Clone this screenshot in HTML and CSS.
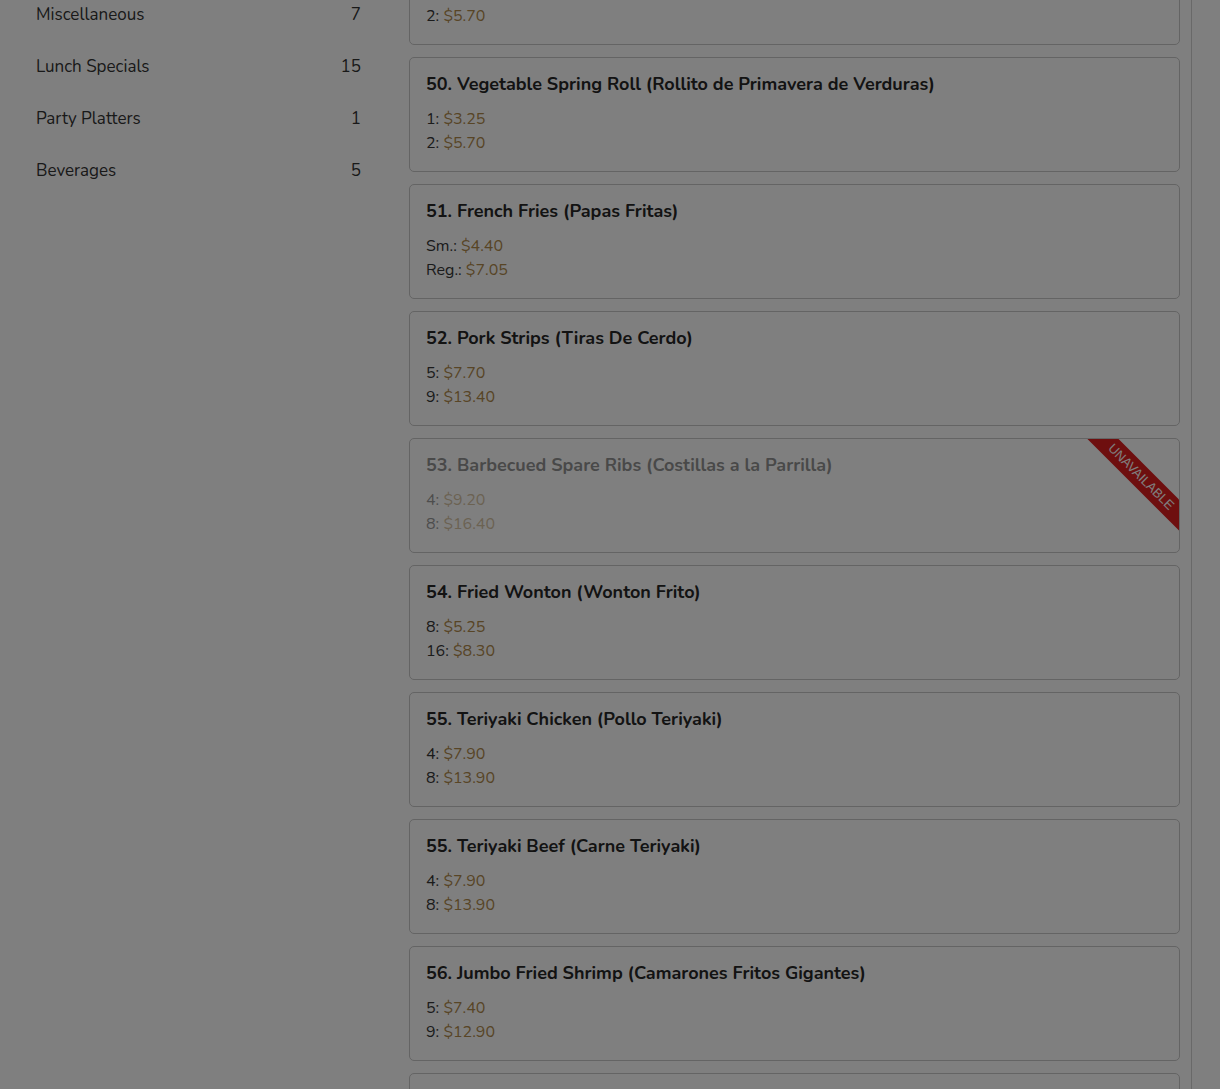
FILE: index.html
```html
<!DOCTYPE html>
<html lang="en">
<head>
<meta charset="utf-8">
<title>Menu</title>
<link rel="stylesheet" href="styles.css">
</head>
<body>
<div class="page">
  <aside class="sidebar">
    <ul class="cats">
      <li class="cat"><span>Miscellaneous</span><span>7</span></li>
      <li class="cat"><span>Lunch Specials</span><span>15</span></li>
      <li class="cat"><span>Party Platters</span><span>1</span></li>
      <li class="cat"><span>Beverages</span><span>5</span></li>
    </ul>
  </aside>
  <main class="menu">
    <div class="card">
      <h3 class="title">49. Shrimp Spring Roll (Rollito de Primavera de Camarones)</h3>
      <div class="prices"><div>1: <span class="price">$3.25</span></div><div>2: <span class="price">$5.70</span></div></div>
    </div>
    <div class="card">
      <h3 class="title">50. Vegetable Spring Roll (Rollito de Primavera de Verduras)</h3>
      <div class="prices"><div>1: <span class="price">$3.25</span></div><div>2: <span class="price">$5.70</span></div></div>
    </div>
    <div class="card">
      <h3 class="title">51. French Fries (Papas Fritas)</h3>
      <div class="prices"><div>Sm.: <span class="price">$4.40</span></div><div>Reg.: <span class="price">$7.05</span></div></div>
    </div>
    <div class="card">
      <h3 class="title">52. Pork Strips (Tiras De Cerdo)</h3>
      <div class="prices"><div>5: <span class="price">$7.70</span></div><div>9: <span class="price">$13.40</span></div></div>
    </div>
    <div class="card unavailable">
      <div class="faded">
        <h3 class="title">53. Barbecued Spare Ribs (Costillas a la Parrilla)</h3>
        <div class="prices"><div>4: <span class="price">$9.20</span></div><div>8: <span class="price">$16.40</span></div></div>
      </div>
      <div class="ribbon">UNAVAILABLE</div>
    </div>
    <div class="card">
      <h3 class="title">54. Fried Wonton (Wonton Frito)</h3>
      <div class="prices"><div>8: <span class="price">$5.25</span></div><div>16: <span class="price">$8.30</span></div></div>
    </div>
    <div class="card">
      <h3 class="title">55. Teriyaki Chicken (Pollo Teriyaki)</h3>
      <div class="prices"><div>4: <span class="price">$7.90</span></div><div>8: <span class="price">$13.90</span></div></div>
    </div>
    <div class="card">
      <h3 class="title">55. Teriyaki Beef (Carne Teriyaki)</h3>
      <div class="prices"><div>4: <span class="price">$7.90</span></div><div>8: <span class="price">$13.90</span></div></div>
    </div>
    <div class="card">
      <h3 class="title">56. Jumbo Fried Shrimp (Camarones Fritos Gigantes)</h3>
      <div class="prices"><div>5: <span class="price">$7.40</span></div><div>9: <span class="price">$12.90</span></div></div>
    </div>
    <div class="card">
      <h3 class="title">57. Chicken Wings (Alitas de Pollo)</h3>
      <div class="prices"><div>4: <span class="price">$6.90</span></div><div>8: <span class="price">$12.40</span></div></div>
    </div>
  </main>
</div>
<div class="overlay"></div>
</body>
</html>
```
FILE: styles.css
```css
html, body {
  margin: 0;
  padding: 0;
  background: #ffffff;
  overflow: hidden;
  height: 100%;
}
body {
  font-family: "Nunito", "Lato", "Noto Sans", sans-serif;
  color: #303030;
}
.page {
  display: flex;
  margin-top: -70px;
  align-items: flex-start;
}
.sidebar {
  width: 325px;
  padding: 58px 16px 0 36px;
  flex: none;
}
.cats {
  list-style: none;
  margin: 0;
  padding: 0;
}
.cat {
  display: flex;
  justify-content: space-between;
  align-items: center;
  height: 52px;
  font-size: 17px;
  color: #323232;
}
.menu {
  margin-left: 32px;
  width: 771px;
  padding-right: 11px;
  border-right: 1px solid #d2d2d2;
  display: flex;
  flex-direction: column;
  gap: 12px;
}
.card {
  position: relative;
  overflow: hidden;
  border: 1px solid #c8c8c8;
  border-radius: 5px;
  padding: 16px;
  height: 115px;
  box-sizing: border-box;
}
.title {
  margin: 0 0 12px 0;
  font-size: 18px;
  line-height: 21px;
  font-weight: 700;
  color: #262626;
}
.prices {
  font-size: 16px;
  line-height: 24px;
  color: #363636;
}
.price {
  color: #b08a4c;
}
.faded {
  opacity: 0.5;
}
.ribbon {
  position: absolute;
  top: 27px;
  right: -42px;
  width: 160px;
  height: 22px;
  line-height: 22px;
  background: #dc1e1e;
  color: #ffffff;
  font-family: "Liberation Sans", Arial, sans-serif;
  font-size: 13px;
  text-align: center;
  transform: rotate(45deg);
}
.overlay {
  position: fixed;
  inset: 0;
  background: rgba(0, 0, 0, 0.5);
}
```
